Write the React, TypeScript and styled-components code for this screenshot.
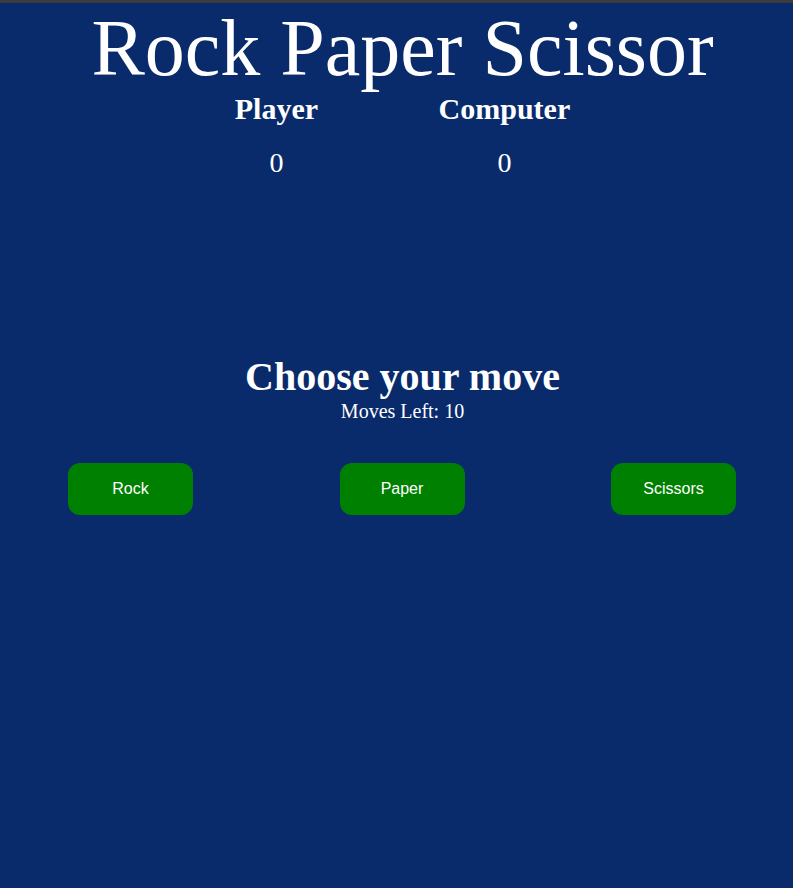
import React from "react";
import styled, { createGlobalStyle } from "styled-components";

const GlobalStyle = createGlobalStyle`
  html, body {
    margin: 0;
    padding: 0;
    background: #0a2b6b;
    overflow: hidden;
  }
  body {
    font-family: "Liberation Serif", "Times New Roman", serif;
    color: #ffffff;
  }
`;

const TopBar = styled.div`
  height: 3px;
  background: #3c3c3c;
`;

const Page = styled.main`
  width: 789px;
  margin-left: 8px;
  min-height: 885px;
  display: flex;
  flex-direction: column;
  align-items: center;
`;

const Title = styled.h1`
  margin: 0;
  font-size: 80px;
  font-weight: 400;
  line-height: normal;
  text-align: center;
`;

const Scoreboard = styled.section`
  width: 456px;
  margin-top: -2px;
  display: flex;
  justify-content: space-around;
`;

const ScoreColumn = styled.div`
  display: flex;
  flex-direction: column;
  align-items: center;
`;

const ScoreLabel = styled.h2`
  margin: 0;
  font-size: 30px;
  font-weight: 700;
  line-height: normal;
`;

const ScoreValue = styled.p`
  margin: 21px 0 0;
  font-size: 28px;
  line-height: normal;
`;

const MoveHeading = styled.h2`
  margin: 174px 0 0;
  font-size: 40px;
  font-weight: 700;
  line-height: normal;
  text-align: center;
`;

const MovesLeft = styled.p`
  margin: 0;
  font-size: 20px;
  line-height: normal;
`;

const ButtonRow = styled.div`
  align-self: stretch;
  margin-top: 40px;
  padding: 0 61px 0 60px;
  display: flex;
  justify-content: space-between;
`;

const MoveButton = styled.button`
  width: 125px;
  height: 52px;
  border: none;
  border-radius: 12px;
  background: #008000;
  color: #ffffff;
  font-family: "Liberation Sans", Arial, sans-serif;
  font-size: 16px;
  cursor: pointer;
`;

export default function App() {
  return (
    <>
      <GlobalStyle />
      <TopBar />
      <Page>
        <Title>Rock Paper Scissor</Title>
        <Scoreboard>
          <ScoreColumn>
            <ScoreLabel>Player</ScoreLabel>
            <ScoreValue>0</ScoreValue>
          </ScoreColumn>
          <ScoreColumn>
            <ScoreLabel>Computer</ScoreLabel>
            <ScoreValue>0</ScoreValue>
          </ScoreColumn>
        </Scoreboard>
        <MoveHeading>Choose your move</MoveHeading>
        <MovesLeft>Moves Left: 10</MovesLeft>
        <ButtonRow>
          <MoveButton>Rock</MoveButton>
          <MoveButton>Paper</MoveButton>
          <MoveButton>Scissors</MoveButton>
        </ButtonRow>
      </Page>
    </>
  );
}
